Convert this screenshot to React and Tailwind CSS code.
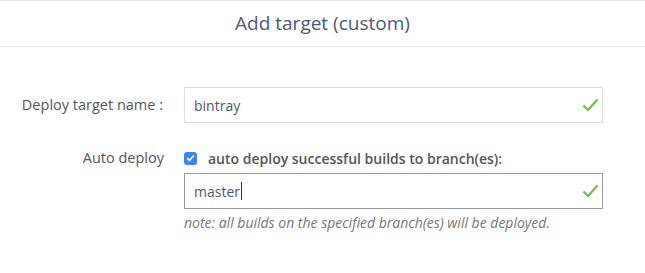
import React from 'react';

function Check() {
    return (
        <svg width="17" height="14" viewBox="0 0 17 14" className="absolute right-[4px] top-1/2 -translate-y-1/2">
            <path d="M1.5 7.5 L6 12 L15.5 1.5" fill="none" stroke="#6cbf42" strokeWidth="2.2" />
        </svg>
    );
}

export default function App() {
    return (
        <div className="w-[645px] h-[273px] bg-white font-['Open_Sans',sans-serif] border-t border-[#e6e6e6]">
            <div className="h-[46px] border-b border-[#e6e6e6] flex items-center justify-center">
                <h1 className="text-[19px] font-medium text-[#4b5a77] leading-none">Add target (custom)</h1>
            </div>

            <div className="pt-[40px] pr-[42px]">
                <div className="flex items-center">
                    <label className="w-[164px] pr-[1px] text-right text-[14.5px] text-[#555]">Deploy target name :</label>
                    <div className="relative ml-[20px] flex-1">
                        <div className="h-[36px] border border-[#dadfe1] flex items-center pl-[9px] text-[14px] text-[#4b5a77]">bintray</div>
                        <Check />
                    </div>
                </div>

                <div className="flex mt-[25px]">
                    <label className="w-[164px] text-right text-[14.5px] text-[#555] leading-[20px]">Auto deploy</label>
                    <div className="ml-[20px] flex-1">
                        <div className="flex items-center h-[20px]">
                            <span className="w-[13px] h-[13px] rounded-[3px] bg-[#3b86f0] flex items-center justify-center">
                                <svg width="9" height="8" viewBox="0 0 9 8">
                                    <path d="M1.2 4.2 L3.5 6.4 L7.8 1.4" fill="none" stroke="white" strokeWidth="1.6" />
                                </svg>
                            </span>
                            <span className="ml-[11px] text-[14px] font-semibold text-[#555]">auto deploy successful builds to branch(es):</span>
                        </div>
                        <div className="relative mt-[5px]">
                            <div className="h-[36px] border border-[#9a9a9a] flex items-center pl-[9px] text-[14px] text-[#4b5a77]">
                                master<span className="w-px h-[18px] bg-[#333] ml-px"></span>
                            </div>
                            <Check />
                        </div>
                        <p className="mt-[3px] text-[14px] italic text-[#777]">note: all builds on the specified branch(es) will be deployed.</p>
                    </div>
                </div>
            </div>
        </div>
    );
}
